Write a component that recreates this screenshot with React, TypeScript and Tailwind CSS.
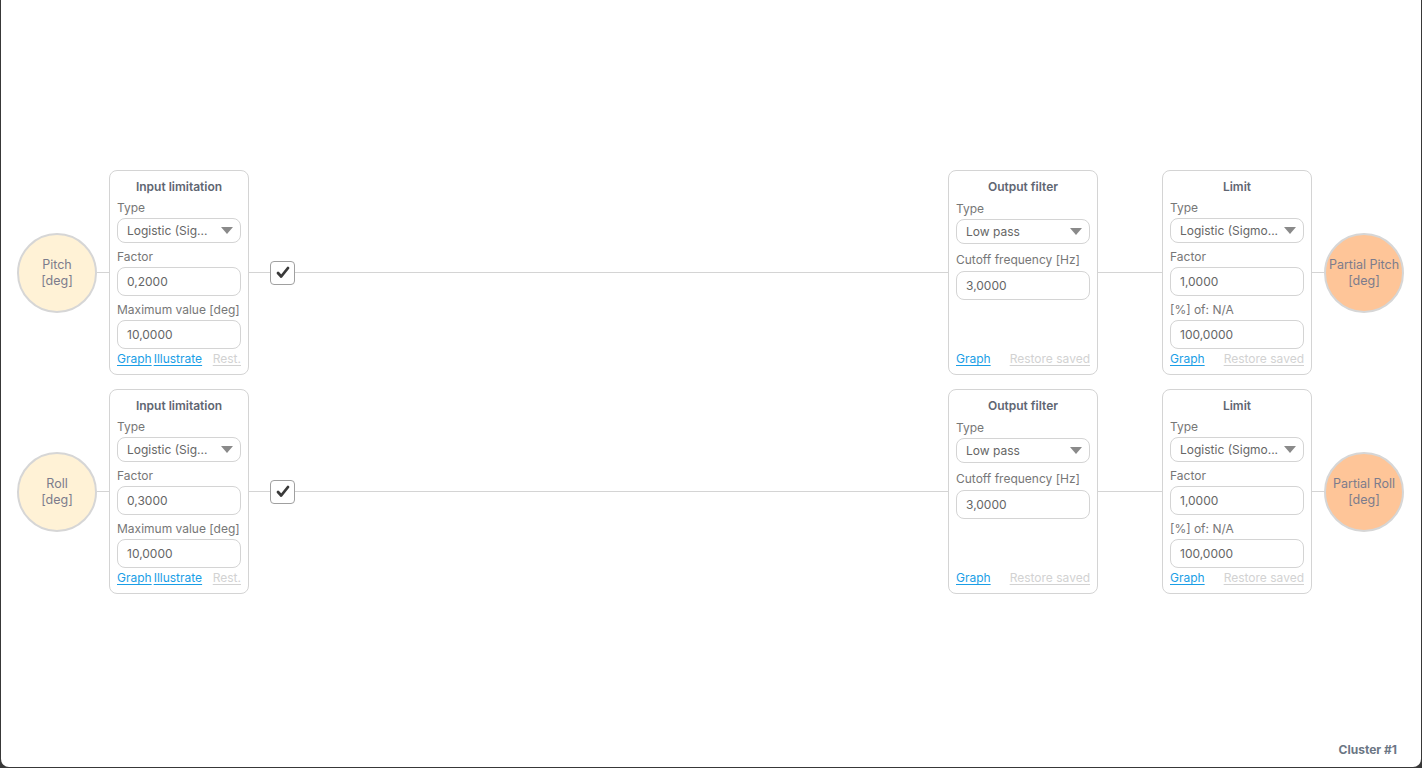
import React from 'react';

type Field = { label: string; value: string; select?: boolean };

type CardProps = {
    title: string;
    width: string;
    fields: Field[];
    links: string[];
    restore: string;
    spread?: boolean;
};

const Arrow = () => (
    <svg width="12" height="7" viewBox="0 0 12 7" className="shrink-0">
        <path d="M0 0 L12 0 L6 7 Z" fill="#8a8a8a" />
    </svg>
);

const Card: React.FC<CardProps> = ({ title, width, fields, links, restore, spread }) => (
    <div className={`${width} h-[205px] shrink-0 flex flex-col rounded-lg border border-[#d4d4d4] bg-white px-[7px] pt-[8px] pb-[7px]`}>
        <div className="text-center text-[12px] font-semibold leading-[16px] text-[#5f6672]">{title}</div>
        <div className="flex flex-col">
            {fields.map((f, i) => {
                // the output filter spaces its fields a little wider
                const labelGap = i === 0 ? (spread ? 'mt-[5px]' : 'mt-[4px]') : spread ? 'mt-[7px]' : 'mt-[5px]';
                const ctrlGap = spread && i > 0 ? 'mt-[2px]' : 'mt-[1px]';
                return (
                    <div key={f.label} className="flex flex-col">
                        <div className={`${labelGap} text-[12px] leading-[18px] text-[#777] whitespace-nowrap`}>{f.label}</div>
                        {f.select ? (
                            <div className={`${ctrlGap} flex h-[25px] items-center justify-between rounded-lg border border-[#d4d4d4] pl-[9px] pr-[7px] text-[12px] text-[#666]`}>
                                <span className="whitespace-nowrap">{f.value}</span>
                                <Arrow />
                            </div>
                        ) : (
                            <div className={`${ctrlGap} flex h-[29px] items-center rounded-lg border border-[#d4d4d4] pl-[9px] text-[12px] text-[#666]`}>
                                {f.value}
                            </div>
                        )}
                    </div>
                );
            })}
        </div>
        <div className="mt-auto flex items-center justify-between text-[12px] leading-[16px]">
            <div className="flex gap-[2px]">
                {links.map((l) => (
                    <span key={l} className="text-[#1a9ee6] underline underline-offset-2">{l}</span>
                ))}
            </div>
            <span className="text-[#d2d2d2] underline underline-offset-2">{restore}</span>
        </div>
    </div>
);

const Circle: React.FC<{ lines: string[]; tone: 'in' | 'out' }> = ({ lines, tone }) => (
    <div
        className={`w-[80px] h-[80px] shrink-0 rounded-full border-2 border-[#d6d6d6] flex flex-col items-center justify-center text-[12.5px] leading-[16px] text-[#7c7c8c] ${tone === 'in' ? 'bg-[#fff2d6]' : 'bg-[#fec598]'}`}
    >
        {lines.map((l) => (
            <span key={l} className="whitespace-nowrap">{l}</span>
        ))}
    </div>
);

const Line: React.FC<{ w: string }> = ({ w }) => <div className={`${w} h-px bg-[#d4d4d4]`} />;

const Check = () => (
    <div className="w-[25px] h-[24px] shrink-0 rounded-[4px] border border-[#a0a0a0] bg-white flex items-center justify-center">
        <svg width="14" height="13" viewBox="0 0 14 13">
            <path d="M2 7 L5.2 10.5 L12 2" fill="none" stroke="#3a3a3a" strokeWidth="2.8" strokeLinecap="round" strokeLinejoin="round" />
        </svg>
    </div>
);

const Row: React.FC<{ name: string; factor: string }> = ({ name, factor }) => (
    <div className="flex items-center">
        <Circle lines={[name, '[deg]']} tone="in" />
        <Line w="w-[12px]" />
        <Card
            title="Input limitation"
            width="w-[140px]"
            fields={[
                { label: 'Type', value: 'Logistic (Sig...', select: true },
                { label: 'Factor', value: factor },
                { label: 'Maximum value [deg]', value: '10,0000' },
            ]}
            links={['Graph', 'Illustrate']}
            restore="Rest."
        />
        <Line w="w-[21px]" />
        <Check />
        <div className="flex-1 h-px bg-[#d4d4d4]" />
        <Card
            title="Output filter"
            width="w-[150px]"
            fields={[
                { label: 'Type', value: 'Low pass', select: true },
                { label: 'Cutoff frequency [Hz]', value: '3,0000' },
            ]}
            links={['Graph']}
            restore="Restore saved"
            spread
        />
        <Line w="w-[64px]" />
        <Card
            title="Limit"
            width="w-[150px]"
            fields={[
                { label: 'Type', value: 'Logistic (Sigmo...', select: true },
                { label: 'Factor', value: '1,0000' },
                { label: '[%] of: N/A', value: '100,0000' },
            ]}
            links={['Graph']}
            restore="Restore saved"
        />
        <Line w="w-[12px]" />
        <Circle lines={[`Partial ${name}`, '[deg]']} tone="out" />
    </div>
);

export default function App() {
    return (
        <div className="h-[768px] w-full bg-[#383838] px-px pb-px" style={{ fontFamily: 'Inter, "Noto Sans", sans-serif' }}>
            <div className="relative h-full w-full rounded-b-lg bg-white">
                <div className="flex flex-col gap-[14px] pt-[170px] pl-[16px] pr-[17px]">
                    <Row name="Pitch" factor="0,2000" />
                    <Row name="Roll" factor="0,3000" />
                </div>
                <div className="absolute right-[24px] bottom-[8px] text-[12px] font-bold text-[#6b7684]">Cluster #1</div>
            </div>
        </div>
    );
}
